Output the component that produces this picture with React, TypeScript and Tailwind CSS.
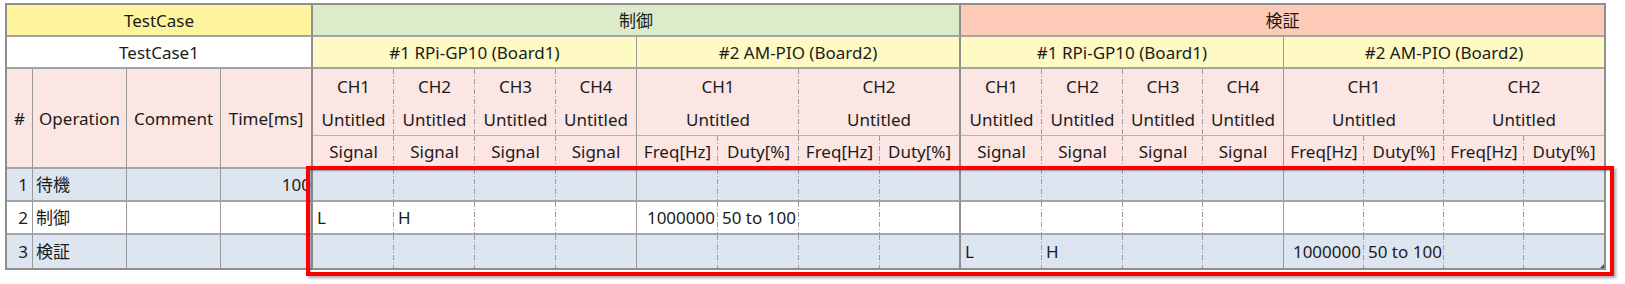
import React from "react";

type RightKind = "dash" | "solid" | "section" | "none";

const RIGHT: Record<RightKind, string> = {
  dash: "bg-[repeating-linear-gradient(to_bottom,#9c9c9c_0px,#9c9c9c_5px,transparent_5px,transparent_7px,#9c9c9c_7px,#9c9c9c_8px,transparent_8px,transparent_10px)] bg-[length:1px_100%] bg-right bg-no-repeat",
  solid: "border-r border-r-[#9a9a9a]",
  section: "border-r-2 border-r-[#8e8e8e]",
  none: "",
};

const BOTTOM_THICK = "border-b-2 border-b-[#a4a4a4]";
const BOTTOM_THIN = "border-b border-b-[#b4b4b4]";

const PINK = "bg-[#fce6e4]";
const BLUE = "bg-[#dce5f0]";
const WHITE = "bg-white";

function rightFor(i: number, section: 0 | 1): RightKind {
  if (i === 7) return section === 0 ? "section" : "none";
  if (i === 3) return "solid";
  return "dash";
}

function Cell({
  className,
  children,
}: {
  className: string;
  children?: React.ReactNode;
}) {
  return <div className={"min-w-0 overflow-hidden whitespace-nowrap " + className}>{children}</div>;
}

const dataRows = [
  {
    n: "1",
    op: "待機",
    time: "100",
    bg: BLUE,
    ctrl: ["", "", "", "", "", "", "", ""],
    ver: ["", "", "", "", "", "", "", ""],
  },
  {
    n: "2",
    op: "制御",
    time: "",
    bg: WHITE,
    ctrl: ["L", "H", "", "", "1000000", "50 to 100", "", ""],
    ver: ["", "", "", "", "", "", "", ""],
  },
  {
    n: "3",
    op: "検証",
    time: "",
    bg: BLUE,
    ctrl: ["", "", "", "", "", "", "", ""],
    ver: ["L", "H", "", "", "1000000", "50 to 100", "", ""],
  },
];

function alignFor(i: number) {
  return i === 4 || i === 6 ? "justify-end pr-[3px]" : "justify-start pl-[4px]";
}

export default function App() {
  const sections: Array<0 | 1> = [0, 1];
  return (
    <div className="relative w-[1625px] h-[284px] bg-white overflow-hidden font-['Noto_Sans','Noto_Sans_CJK_JP',sans-serif] text-[17px] leading-none text-[#1b1b1b]">
      <div className="relative ml-[5px] mt-[3px] w-fit border-2 border-[#8e8e8e] grid grid-cols-[26px_94px_94px_92px_81px_81px_81px_81px_81px_81px_81px_81px_81px_81px_80px_81px_80px_80px_80px_80px] grid-rows-[32px_32px_67px_33px_33px_33px_33px]">
        {/* Row 1 */}
        <Cell className={"col-span-4 flex items-center justify-center bg-[#fff49e] " + BOTTOM_THICK + " " + RIGHT.section}>TestCase</Cell>
        <Cell className={"col-span-8 flex items-center justify-center bg-[#ddebcb] " + BOTTOM_THICK + " " + RIGHT.section}>制御</Cell>
        <Cell className={"col-span-8 flex items-center justify-center bg-[#fdcbb8] " + BOTTOM_THICK}>検証</Cell>

        {/* Row 2 */}
        <Cell className={"col-span-4 flex items-center justify-center bg-white " + BOTTOM_THICK + " " + RIGHT.section}>TestCase1</Cell>
        {sections.map((s) => (
          <React.Fragment key={"b" + s}>
            <Cell className={"col-span-4 flex items-center justify-center bg-[#fff9c3] " + BOTTOM_THICK + " " + RIGHT.solid}>#1 RPi-GP10 (Board1)</Cell>
            <Cell className={"col-span-4 flex items-center justify-center bg-[#fff9c3] " + BOTTOM_THICK + " " + (s === 0 ? RIGHT.section : "")}>#2 AM-PIO (Board2)</Cell>
          </React.Fragment>
        ))}

        {/* Row 3: left headers + CH headers */}
        <Cell className={"row-span-2 flex items-center justify-center " + PINK + " " + BOTTOM_THICK + " " + RIGHT.solid}>#</Cell>
        <Cell className={"row-span-2 flex items-center justify-center " + PINK + " " + BOTTOM_THICK + " " + RIGHT.solid}>Operation</Cell>
        <Cell className={"row-span-2 flex items-center justify-center " + PINK + " " + BOTTOM_THICK + " " + RIGHT.solid}>Comment</Cell>
        <Cell className={"row-span-2 flex items-center justify-center " + PINK + " " + BOTTOM_THICK + " " + RIGHT.section}>Time[ms]</Cell>
        {sections.map((s) => (
          <React.Fragment key={"ch" + s}>
            {["CH1", "CH2", "CH3", "CH4"].map((ch, i) => (
              <Cell key={ch} className={"flex flex-col " + PINK + " " + BOTTOM_THIN + " " + RIGHT[rightFor(i, s)]}>
                <div className="flex h-[34px] items-center justify-center">{ch}</div>
                <div className="flex h-[32px] items-center justify-center">Untitled</div>
              </Cell>
            ))}
            {["CH1", "CH2"].map((ch, j) => (
              <Cell key={"p" + ch} className={"col-span-2 flex flex-col " + PINK + " " + BOTTOM_THIN + " " + RIGHT[rightFor(5 + j * 2, s)]}>
                <div className="flex h-[34px] items-center justify-center">{ch}</div>
                <div className="flex h-[32px] items-center justify-center">Untitled</div>
              </Cell>
            ))}
          </React.Fragment>
        ))}

        {/* Row 4: Signal / Freq / Duty */}
        {sections.map((s) => (
          <React.Fragment key={"sg" + s}>
            {["Signal", "Signal", "Signal", "Signal", "Freq[Hz]", "Duty[%]", "Freq[Hz]", "Duty[%]"].map((t, i) => (
              <Cell key={i} className={"flex items-center justify-center " + PINK + " " + BOTTOM_THICK + " " + RIGHT[rightFor(i, s)]}>
                {t}
              </Cell>
            ))}
          </React.Fragment>
        ))}

        {/* Data rows */}
        {dataRows.map((r, ri) => {
          const bottom = ri === dataRows.length - 1 ? "" : BOTTOM_THICK;
          return (
            <React.Fragment key={"r" + ri}>
              <Cell className={"flex items-center justify-end pr-[4px] " + r.bg + " " + bottom + " " + RIGHT.solid}>{r.n}</Cell>
              <Cell className={"flex items-center justify-start pl-[3px] " + r.bg + " " + bottom + " " + RIGHT.solid}>{r.op}</Cell>
              <Cell className={"flex items-center " + r.bg + " " + bottom + " " + RIGHT.solid}></Cell>
              <Cell className={"flex items-center justify-end pr-0 " + r.bg + " " + bottom + " " + RIGHT.section}>{r.time}</Cell>
              {sections.map((s) => (
                <React.Fragment key={"d" + s}>
                  {(s === 0 ? r.ctrl : r.ver).map((v, i) => (
                    <Cell key={i} className={"flex items-center " + alignFor(i) + " " + r.bg + " " + bottom + " " + RIGHT[rightFor(i, s)]}>
                      {v}
                    </Cell>
                  ))}
                </React.Fragment>
              ))}
            </React.Fragment>
          );
        })}

        {/* resize grip */}
        <svg className="absolute right-0 bottom-0" width="4" height="4" viewBox="0 0 4 4">
          <polygon points="4,0 4,4 0,4" fill="#3b56a6" />
        </svg>
      </div>

      {/* red highlight */}
      <div className="absolute left-[306px] top-[166px] w-[1308px] h-[110px] border-4 border-[#ff0000] shadow-[2px_2px_3px_rgba(0,0,0,0.35),inset_1px_1px_2px_rgba(0,0,0,0.35)] pointer-events-none" />
    </div>
  );
}
